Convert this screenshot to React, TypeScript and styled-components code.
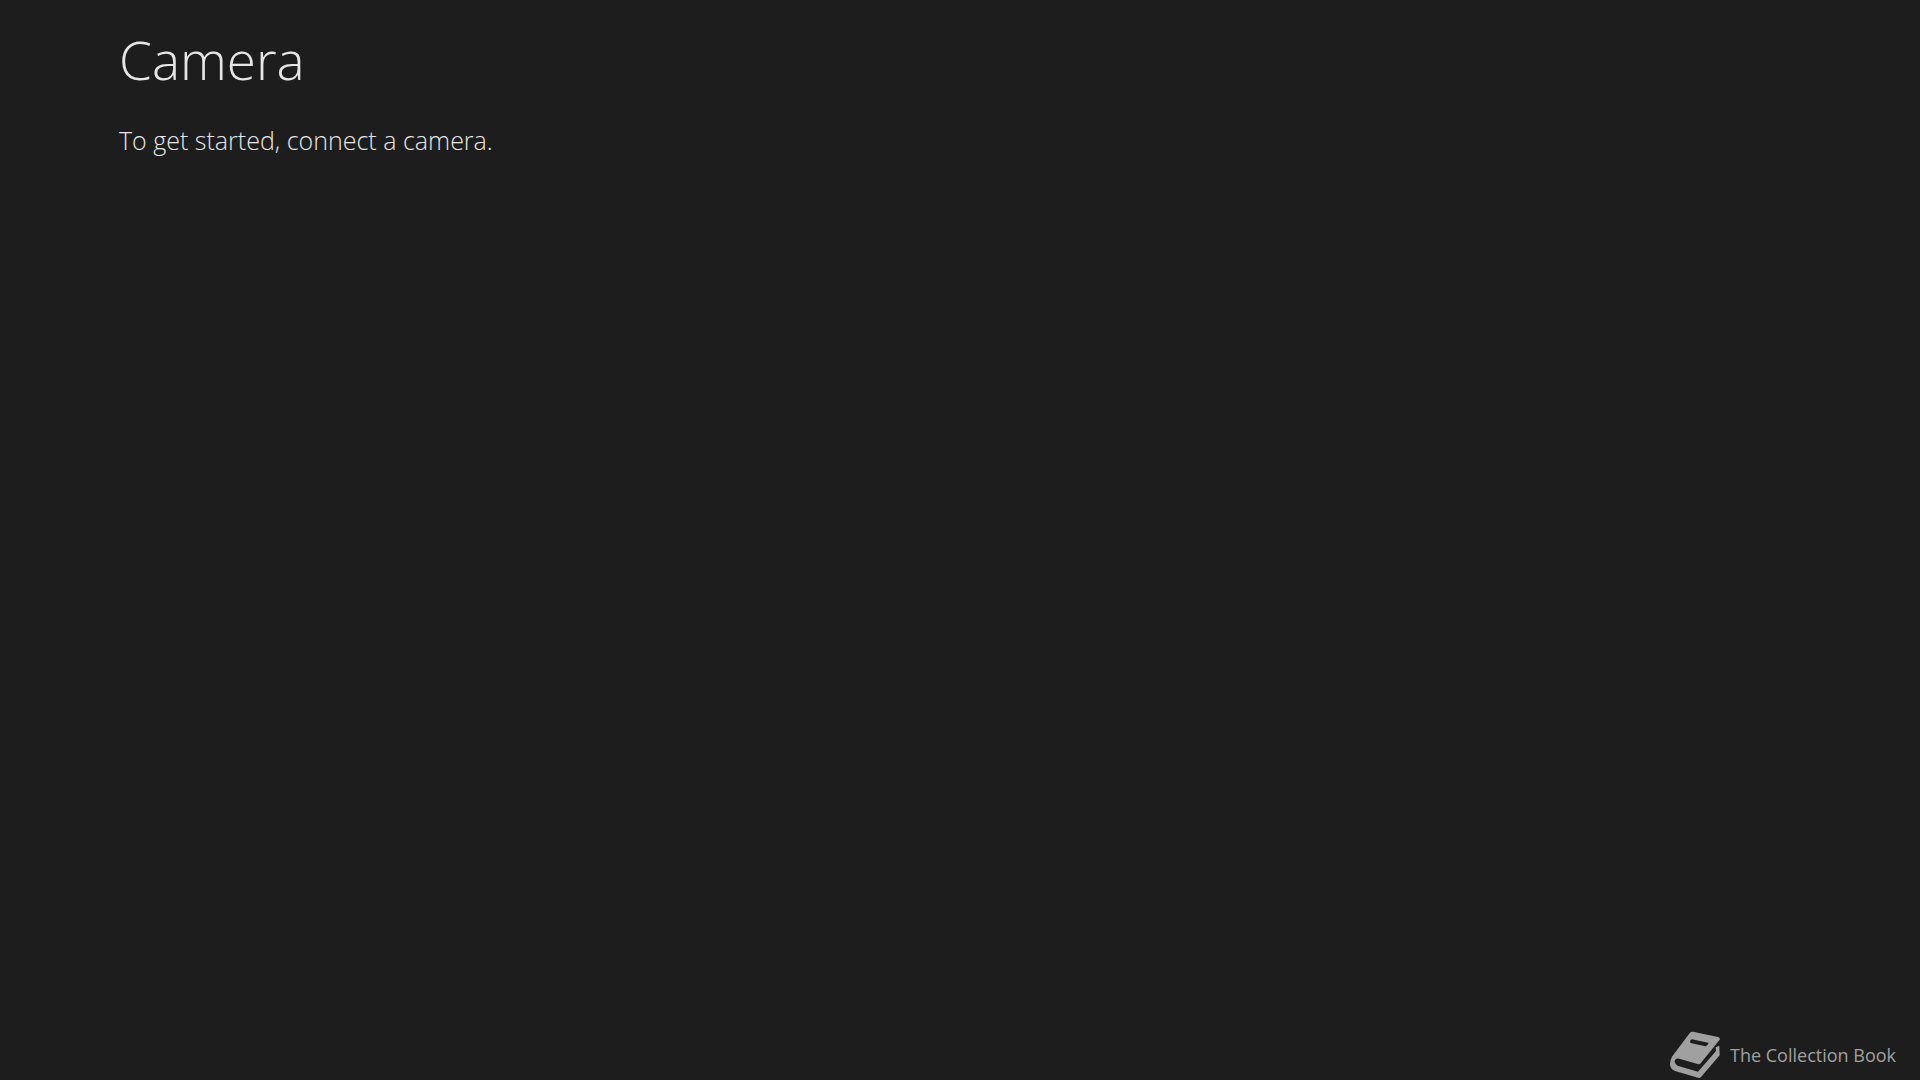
import React from "react";
import styled, { createGlobalStyle } from "styled-components";

const GlobalStyle = createGlobalStyle`
  * {
    box-sizing: border-box;
  }
  body {
    margin: 0;
    background: #1d1d1d;
    font-family: "Open Sans", "Noto Sans", sans-serif;
  }
`;

const Page = styled.div`
  display: flex;
  flex-direction: column;
  justify-content: space-between;
  min-height: 100vh;
`;

const Content = styled.main`
  padding: 24px 119px 0;
  color: #e6e6e6;
  font-weight: 300;
`;

const Title = styled.h1`
  margin: 0;
  font-size: 53px;
  line-height: 72px;
  font-weight: 300;
`;

const Message = styled.p`
  margin: 24px 0 0;
  font-size: 25px;
  line-height: 40px;
`;

const Footer = styled.footer`
  display: flex;
  align-items: center;
  justify-content: flex-end;
  gap: 10px;
  padding: 0 24px 2px;
  color: #a0a0a0;
  font-size: 18px;
  line-height: 24px;
`;

const Logo = styled.svg`
  width: 50px;
  height: 47px;
`;

const BookLogo = () => (
  <Logo viewBox="0 0 150 141" aria-hidden="true">
    <path
      fill="#a0a0a0"
      fillRule="evenodd"
      d="M69 2L144 18Q151 20 149 26L92 97Q89 101 83 99L28 83Q16 80 14 91Q15 101 25 105L84 122L138 60L137 49L148 44L149 73L93 138Q89 142 84 140L15 120Q0 114 0 99Q0 87 7 76L57 9Q62 1 69 2ZM66 25Q60 26 60 33L62 36L106 46Q112 44 116 37L114 35Z"
    />
  </Logo>
);

export default function App() {
  return (
    <>
      <GlobalStyle />
      <Page>
        <Content>
          <Title>Camera</Title>
          <Message>To get started, connect a camera.</Message>
        </Content>
        <Footer>
          <BookLogo />
          <span>The Collection Book</span>
        </Footer>
      </Page>
    </>
  );
}
